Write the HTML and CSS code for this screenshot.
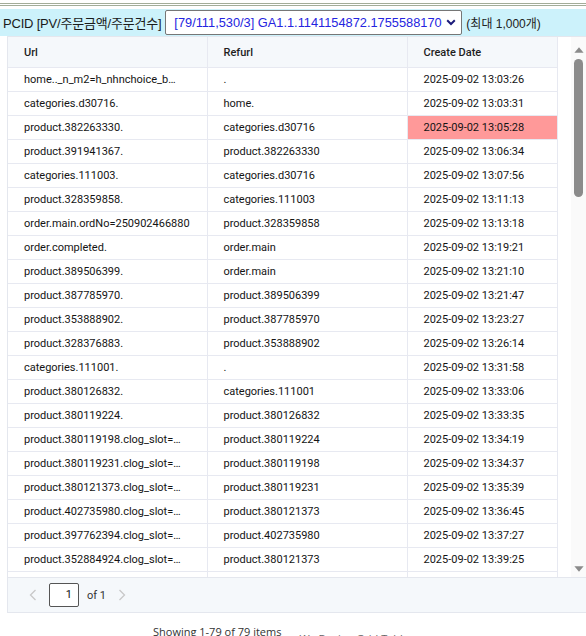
FILE: index.html
```html
<!DOCTYPE html>
<html lang="ko">
<head>
<meta charset="utf-8">
<title>PCID</title>
<link rel="stylesheet" href="styles.css">
</head>
<body>
<div class="rule"></div>
<div class="bar">
  <span class="label">PCID [PV/주문금액/주문건수]</span>
  <div class="select">
    <span class="select-text">[79/111,530/3] GA1.1.1141154872.1755588170</span>
    <svg class="chev" width="10" height="7" viewBox="0 0 10 7"><path d="M1.2 1.3 L5 5 L8.8 1.3" fill="none" stroke="#1b1b7a" stroke-width="2"/></svg>
  </div>
  <span class="max">(최대 1,000개)</span>
</div>
<div class="grid">
  <div class="body-wrap">
    <div class="viewport">
    <table class="tbl">
      <colgroup><col class="c1"><col class="c2"><col class="c3"></colgroup>
      <thead><tr><th>Url</th><th>Refurl</th><th>Create Date</th></tr></thead>
      <tbody>
        <tr><td>home.._n_m2=h_nhnchoice_b…</td><td>.</td><td>2025-09-02 13:03:26</td></tr>
        <tr><td>categories.d30716.</td><td>home.</td><td>2025-09-02 13:03:31</td></tr>
        <tr><td>product.382263330.</td><td>categories.d30716</td><td class="hl">2025-09-02 13:05:28</td></tr>
        <tr><td>product.391941367.</td><td>product.382263330</td><td>2025-09-02 13:06:34</td></tr>
        <tr><td>categories.111003.</td><td>categories.d30716</td><td>2025-09-02 13:07:56</td></tr>
        <tr><td>product.328359858.</td><td>categories.111003</td><td>2025-09-02 13:11:13</td></tr>
        <tr><td>order.main.ordNo=250902466880</td><td>product.328359858</td><td>2025-09-02 13:13:18</td></tr>
        <tr><td>order.completed.</td><td>order.main</td><td>2025-09-02 13:19:21</td></tr>
        <tr><td>product.389506399.</td><td>order.main</td><td>2025-09-02 13:21:10</td></tr>
        <tr><td>product.387785970.</td><td>product.389506399</td><td>2025-09-02 13:21:47</td></tr>
        <tr><td>product.353888902.</td><td>product.387785970</td><td>2025-09-02 13:23:27</td></tr>
        <tr><td>product.328376883.</td><td>product.353888902</td><td>2025-09-02 13:26:14</td></tr>
        <tr><td>categories.111001.</td><td>.</td><td>2025-09-02 13:31:58</td></tr>
        <tr><td>product.380126832.</td><td>categories.111001</td><td>2025-09-02 13:33:06</td></tr>
        <tr><td>product.380119224.</td><td>product.380126832</td><td>2025-09-02 13:33:35</td></tr>
        <tr><td>product.380119198.clog_slot=…</td><td>product.380119224</td><td>2025-09-02 13:34:19</td></tr>
        <tr><td>product.380119231.clog_slot=…</td><td>product.380119198</td><td>2025-09-02 13:34:37</td></tr>
        <tr><td>product.380121373.clog_slot=…</td><td>product.380119231</td><td>2025-09-02 13:35:39</td></tr>
        <tr><td>product.402735980.clog_slot=…</td><td>product.380121373</td><td>2025-09-02 13:36:45</td></tr>
        <tr><td>product.397762394.clog_slot=…</td><td>product.402735980</td><td>2025-09-02 13:37:27</td></tr>
        <tr><td>product.352884924.clog_slot=…</td><td>product.380121373</td><td>2025-09-02 13:39:25</td></tr>
        <tr><td>product.352884924.</td><td>product.352884924</td><td>2025-09-02 13:40:02</td></tr>
        <tr><td>categories.111001.</td><td>product.352884924</td><td>2025-09-02 13:41:18</td></tr>
      </tbody>
    </table>
    </div>
    <div class="vscroll">
      <svg class="sb-arrow" width="10" height="6" viewBox="0 0 10 6"><path d="M5 0.3 L9.6 5.8 L0.4 5.8 Z" fill="#8b8b8b"/></svg>
      <div class="sb-thumb"></div>
      <svg class="sb-arrow sb-down" width="10" height="6" viewBox="0 0 10 6"><path d="M0.4 0.2 L9.6 0.2 L5 5.7 Z" fill="#8b8b8b"/></svg>
    </div>
  </div>
  <div class="pager">
    <svg class="arr" width="8" height="12" viewBox="0 0 8 12"><path d="M6.5 1 L1.5 6 L6.5 11" fill="none" stroke="#c8c8c8" stroke-width="1.3"/></svg>
    <div class="page-input">1</div>
    <span class="of">of 1</span>
    <svg class="arr" width="8" height="12" viewBox="0 0 8 12"><path d="M1.5 1 L6.5 6 L1.5 11" fill="none" stroke="#c8c8c8" stroke-width="1.3"/></svg>
  </div>
</div>
<div class="status">
  <span class="showing">Showing 1-79 of 79 items</span>
  <span class="caption">Wa Design Grid Table</span>
</div>
</body>
</html>
```
FILE: styles.css
```css
html, body {
  margin: 0;
  padding: 0;
  background: #ffffff;
  font-family: "Liberation Sans", Arial, sans-serif;
}
.rule {
  height: 1px;
  margin-top: 3px;
  border-top: 1px solid #a3ad99;
  border-bottom: 1px solid #a3ad99;
}
.bar {
  margin-top: 3px;
  height: 27px;
  background: #ccf2fb;
  display: flex;
  align-items: center;
  padding-left: 3px;
  font-size: 13px;
  color: #1a1a1a;
}
.label {
  font-family: "Liberation Sans", "Noto Sans CJK KR", sans-serif;
  font-size: 13px;
  letter-spacing: -0.2px;
  margin-right: 4px;
  white-space: nowrap;
}
.select {
  box-sizing: border-box;
  width: 297px;
  height: 25px;
  flex: none;
  border: 1px solid #767676;
  border-radius: 2px;
  background: #fff;
  display: flex;
  align-items: center;
  padding-left: 8px;
  padding-right: 5px;
}
.select-text {
  color: #2424e0;
  font-size: 12.8px;
  white-space: nowrap;
}
.chev { display: block; margin-left: auto; flex: none; }
.max {
  margin-left: 4px;
  font-family: "Liberation Sans", "Noto Sans CJK KR", sans-serif;
  font-size: 12px;
  color: #222;
  white-space: nowrap;
}
.grid {
  margin-left: 7px;
  border-top: 1px solid #e4e7ee;
  border-left: 1px solid #e4e7ee;
  border-bottom: 1px solid #e4e7ee;
}
.body-wrap {
  display: flex;
  height: 540px;
}
.viewport {
  flex: 1;
  overflow: hidden;
}
.vscroll {
  width: 15px;
  flex: none;
  background: #fafafa;
  display: flex;
  flex-direction: column;
  align-items: center;
}
.sb-arrow {
  display: block;
  margin-top: 10px;
}
.sb-thumb {
  width: 9px;
  height: 138px;
  margin-top: 6px;
  border-radius: 5px;
  background: #8b8b8b;
}
.sb-arrow.sb-down {
  margin-top: auto;
  margin-bottom: 5px;
}
.tbl {
  width: 549px;
  table-layout: fixed;
  border-collapse: collapse;
  font-family: Roboto, "Noto Sans", sans-serif;
  font-size: 11px;
  color: #141414;
}
.c1 { width: 199px; }
.c2 { width: 200px; }
.c3 { width: 150px; }
.tbl th {
  background: #f5f8fb;
  height: 30px;
  padding: 0 10px 0 16px;
  text-align: left;
  font-weight: 500;
  color: #1e1e1e;
  border-right: 1px solid #e7e9f1;
  border-bottom: 1px solid #e7e9f1;
}
.tbl td {
  height: 23px;
  padding: 0 12px 0 16px;
  border-right: 1px solid #e7e9f1;
  border-bottom: 1px solid #e7e9f1;
  white-space: nowrap;
  overflow: hidden;
  text-overflow: ellipsis;
}
.tbl td.hl {
  background: #ff9999;
}
.pager {
  height: 34px;
  background: #f5f8fb;
  border-top: 1px solid #e4e7ee;
  display: flex;
  align-items: center;
  padding-left: 21px;
  font-family: Roboto, "Noto Sans", sans-serif;
  font-size: 11px;
  color: #333;
}
.arr { display: block; }
.page-input {
  box-sizing: border-box;
  width: 30px;
  height: 24px;
  margin-left: 12px;
  border: 1px solid #555;
  border-radius: 2px;
  background: #fff;
  text-align: right;
  padding-right: 6px;
  line-height: 22px;
  color: #111;
}
.of {
  margin-left: 8px;
  margin-right: 12px;
}
.status {
  display: flex;
  align-items: flex-start;
  padding-left: 153px;
  margin-top: 11px;
  font-family: "Open Sans", "Noto Sans", sans-serif;
  font-size: 11px;
  color: #333;
}
.caption {
  margin-left: 18px;
  margin-top: 7px;
  color: #666;
}
```
